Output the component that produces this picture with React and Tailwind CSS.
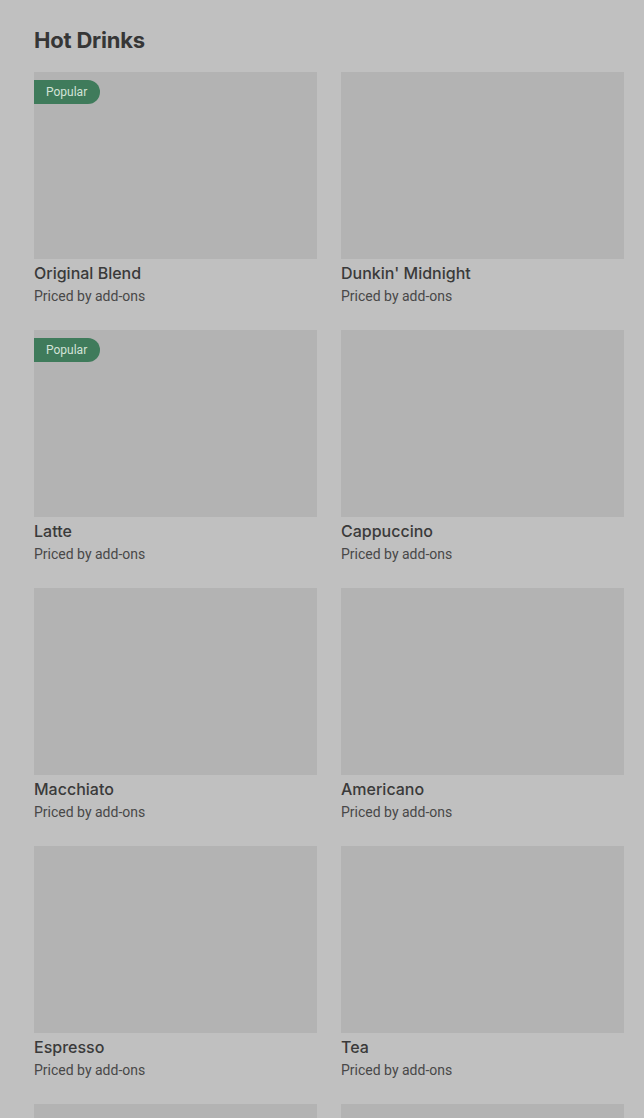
const drinks = [
  { name: "Original Blend", popular: true },
  { name: "Dunkin' Midnight" },
  { name: "Latte", popular: true },
  { name: "Cappuccino" },
  { name: "Macchiato" },
  { name: "Americano" },
  { name: "Espresso" },
  { name: "Tea" },
  { name: "Chai Latte" },
  { name: "Hot Chocolate" },
];

function DrinkCard({ drink }) {
  return (
    <div className="flex flex-col">
      <div className="relative h-[187px] bg-[#b3b3b3]">
        {drink.popular && (
          <span className="absolute left-0 top-[8px] h-[24px] pl-[12px] pr-[13px] flex items-center rounded-r-full bg-[#3f7b5b] text-[#d3e3d8] text-[12px] font-[Roboto,sans-serif]">
            Popular
          </span>
        )}
      </div>
      <p className="mt-[3px] text-[16px] leading-[22px] font-medium text-[#3a3a3a]">{drink.name}</p>
      <p className="mt-[2px] text-[14px] leading-[20px] text-[#484848] font-[Roboto,sans-serif]">Priced by add-ons</p>
    </div>
  );
}

export default function App() {
  return (
    <div
      className="min-h-screen bg-[#c0c0c0] pl-[34px] pr-[20px] pt-[26px] pb-[24px]"
      style={{ fontFamily: "Inter, 'Noto Sans', sans-serif" }}
    >
      <h2 className="text-[22px] leading-[28px] font-bold tracking-[-0.2px] text-[#363636] mb-[18px]">Hot Drinks</h2>
      <div className="grid grid-cols-2 gap-x-[24px] gap-y-[24px]">
        {drinks.map((d) => (
          <DrinkCard key={d.name} drink={d} />
        ))}
      </div>
    </div>
  );
}
